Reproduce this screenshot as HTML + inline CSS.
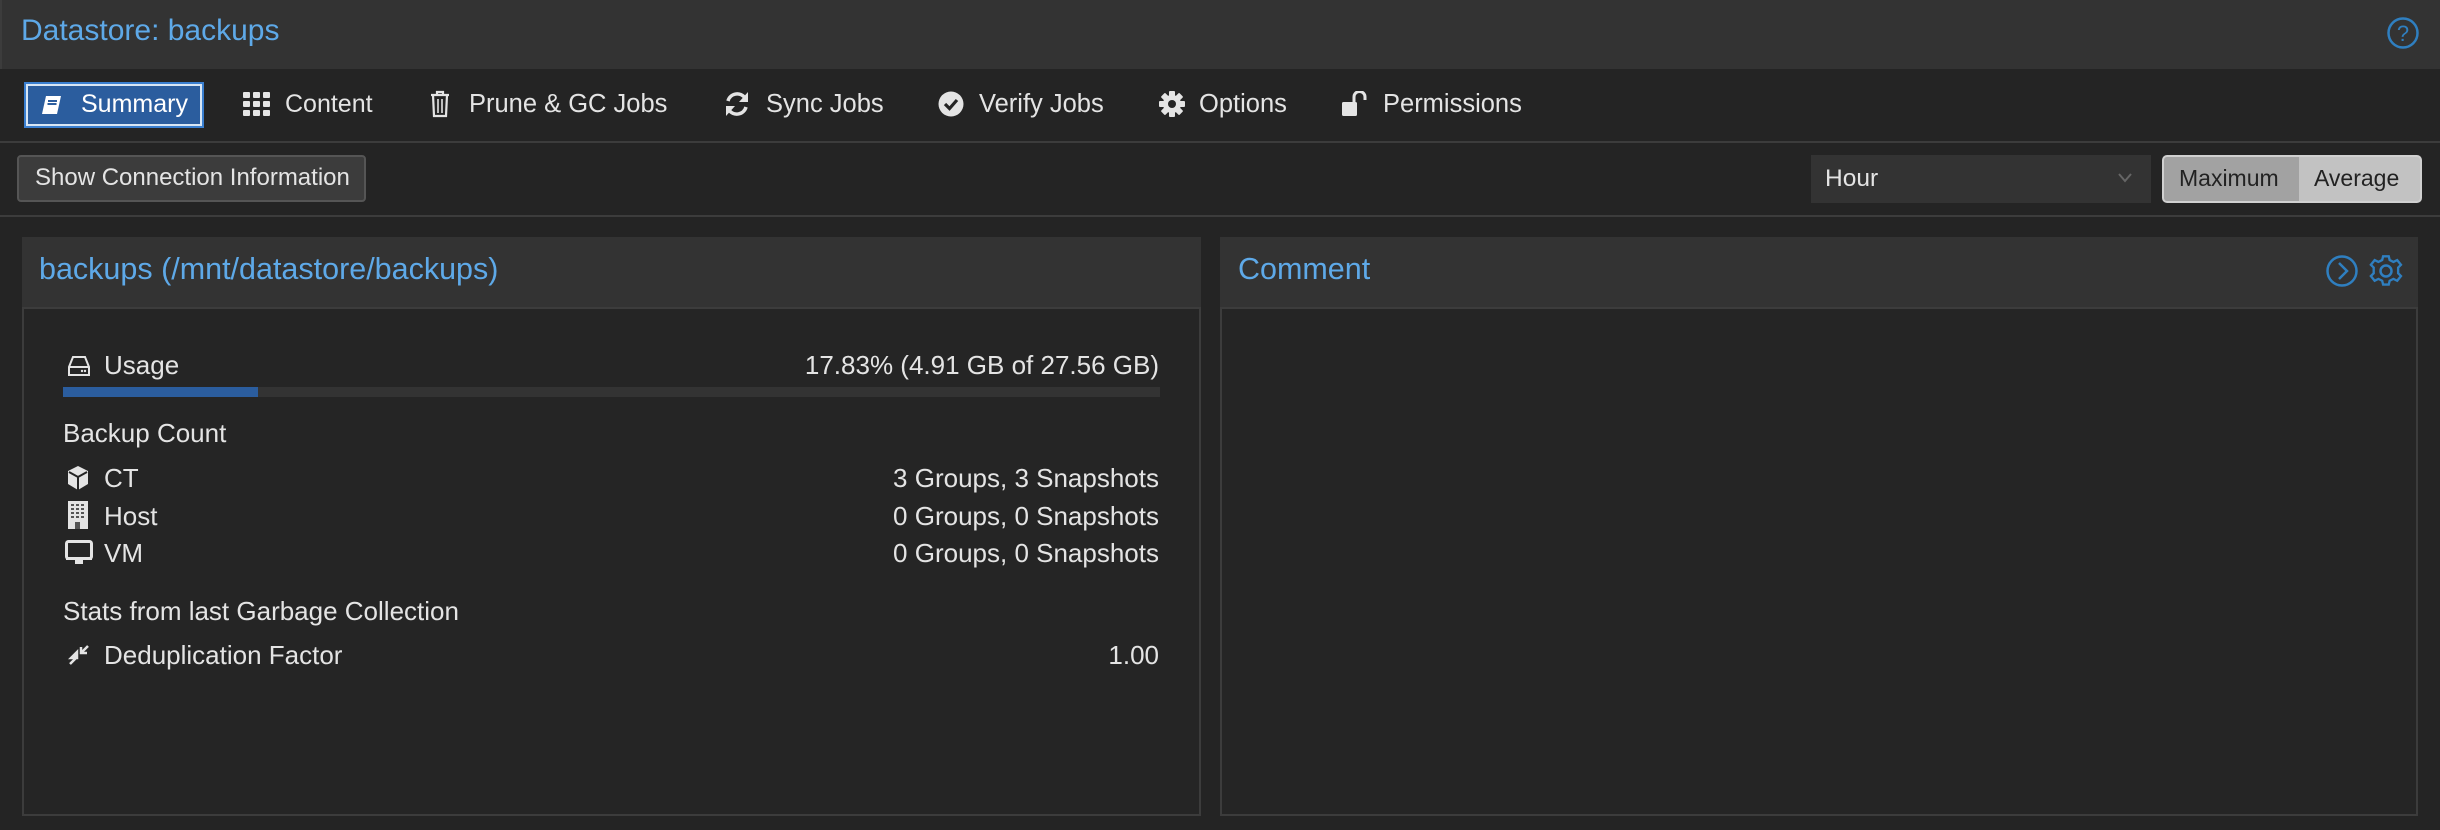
<!DOCTYPE html>
<html><head><style>
*{margin:0;padding:0;box-sizing:border-box}
body{width:2440px;height:830px;background:#242424;font-family:"Liberation Sans",Arial,sans-serif;color:#e4e4e4;position:relative;overflow:hidden}
.a{position:absolute;white-space:nowrap}
.t{font-size:26px;line-height:30px}
svg{display:block}
</style></head><body>
<div class="a" style="left:0;top:0;width:2440px;height:69px;background:#333;border-left:2px solid #3c3c3c"></div>
<div class="a" style="left:21px;top:13px;font-size:30px;line-height:36px;color:#5ea9e8">Datastore: backups</div>
<svg class="a" style="left:2386px;top:16px" width="34" height="34" viewBox="0 0 34 34"><circle cx="17" cy="17" r="14.5" fill="none" stroke="#2f7fc0" stroke-width="2.5"/><text x="17" y="25" text-anchor="middle" font-size="22" font-family="Liberation Sans" fill="#2f7fc0">?</text></svg>

<div class="a" style="left:0;top:141px;width:2440px;height:2px;background:#3c3c3c"></div>
<div class="a" style="left:24px;top:82px;width:180px;height:46px;background:#2b5d9e;border:2px solid #3a7fd0;box-shadow:inset 0 0 0 2px #d8e6f5"></div>
<svg class="a" style="left:40px;top:94px" width="24" height="24" viewBox="0 0 24 24"><path d="M6 2h15l-4 18H2z" fill="#fff"/><path d="M8 7h9M7.5 10h9" stroke="#2b5d9e" stroke-width="2"/></svg>
<div class="a t" style="left:81px;top:89px;font-size:25px;color:#fff">Summary</div>
<svg class="a" style="left:243px;top:92px" width="28" height="24" viewBox="0 0 28 24"><g fill="#e4e4e4"><rect x="0" y="0" width="7" height="6" rx="1"/><rect x="10" y="0" width="7" height="6" rx="1"/><rect x="20" y="0" width="7" height="6" rx="1"/><rect x="0" y="9" width="7" height="6" rx="1"/><rect x="10" y="9" width="7" height="6" rx="1"/><rect x="20" y="9" width="7" height="6" rx="1"/><rect x="0" y="18" width="7" height="6" rx="1"/><rect x="10" y="18" width="7" height="6" rx="1"/><rect x="20" y="18" width="7" height="6" rx="1"/></g></svg>
<div class="a t" style="left:285px;top:89px;font-size:25px">Content</div>
<svg class="a" style="left:430px;top:90px" width="20" height="28" viewBox="0 0 20 28"><path d="M1 5h18M7 5V2h6v3M3 5l1 21h12l1-21" fill="none" stroke="#e4e4e4" stroke-width="2.2"/><path d="M8 9v14M12 9v14" stroke="#e4e4e4" stroke-width="1.6"/></svg>
<div class="a t" style="left:469px;top:89px;font-size:25.5px">Prune &amp; GC Jobs</div>
<svg class="a" style="left:724px;top:90px" width="26" height="28" viewBox="0 0 26 28"><path d="M21 8A9.5 9.5 0 0 0 4 11M5 20a9.5 9.5 0 0 0 17-3" fill="none" stroke="#e4e4e4" stroke-width="3.5"/><path d="M24 2v10h-9zM2 26V16h9z" fill="#e4e4e4"/></svg>
<div class="a t" style="left:766px;top:89px;font-size:25.5px">Sync Jobs</div>
<svg class="a" style="left:938px;top:91px" width="26" height="26" viewBox="0 0 26 26"><circle cx="13" cy="13" r="12.5" fill="#e4e4e4"/><path d="M7 13l4.5 4.5L19 9" fill="none" stroke="#242424" stroke-width="3.2"/></svg>
<div class="a t" style="left:979px;top:89px;font-size:25.5px">Verify Jobs</div>
<svg class="a" style="left:1159px;top:91px" width="26" height="26" viewBox="0 0 26 26"><g fill="#e4e4e4"><circle cx="13" cy="13" r="9"/><rect x="10" y="0" width="6" height="26" rx="1"/><rect x="10" y="0" width="6" height="26" rx="1" transform="rotate(45 13 13)"/><rect x="10" y="0" width="6" height="26" rx="1" transform="rotate(90 13 13)"/><rect x="10" y="0" width="6" height="26" rx="1" transform="rotate(135 13 13)"/></g><circle cx="13" cy="13" r="4" fill="#242424"/></svg>
<div class="a t" style="left:1199px;top:89px;font-size:25.5px">Options</div>
<svg class="a" style="left:1342px;top:91px" width="28" height="26" viewBox="0 0 28 26"><rect x="0" y="11" width="15" height="14" rx="1.5" fill="#e4e4e4"/><path d="M12 11V6a5.5 5.5 0 0 1 11 0v3" fill="none" stroke="#e4e4e4" stroke-width="3"/></svg>
<div class="a t" style="left:1383px;top:89px;font-size:25.5px">Permissions</div>

<div class="a" style="left:0;top:215px;width:2440px;height:2px;background:#3c3c3c"></div>
<div class="a" style="left:17px;top:155px;width:349px;height:47px;background:#3c3c3c;border:2px solid #555;border-radius:4px"></div>
<div class="a t" style="left:35px;top:163px;font-size:24px">Show Connection Information</div>
<div class="a" style="left:1811px;top:155px;width:340px;height:48px;background:#333"></div>
<div class="a t" style="left:1825px;top:164px;font-size:24.5px">Hour</div>
<svg class="a" style="left:2117px;top:172px" width="16" height="12" viewBox="0 0 16 12"><path d="M2 2l6 7 6-7" fill="none" stroke="#666" stroke-width="2"/></svg>
<div class="a" style="left:2162px;top:155px;width:260px;height:48px;background:#c2c2c2;border-radius:5px;border:2px solid #d0d0d0"></div>
<div class="a" style="left:2164px;top:157px;width:135px;height:44px;background:#a2a2a2;border-radius:3px 0 0 3px"></div>
<div class="a t" style="left:2179px;top:163px;font-size:23px;color:#222">Maximum</div>
<div class="a t" style="left:2314px;top:163px;font-size:23px;color:#222">Average</div>

<!-- left panel -->
<div class="a" style="left:22px;top:237px;width:1179px;height:70px;background:#333"></div>
<div class="a" style="left:39px;top:251px;font-size:30.5px;line-height:36px;color:#5ea9e8">backups (/mnt/datastore/backups)</div>
<div class="a" style="left:22px;top:307px;width:1179px;height:509px;border:2px solid #3c3c3c;background:#252525"></div>
<svg class="a" style="left:67px;top:355px" width="24" height="22" viewBox="0 0 24 22"><path d="M6 2h12l4 10v8H2v-8z" fill="none" stroke="#e4e4e4" stroke-width="2"/><path d="M2 12h20" stroke="#e4e4e4" stroke-width="2"/><circle cx="15" cy="16" r="1.2" fill="#e4e4e4"/><circle cx="18" cy="16" r="1.2" fill="#e4e4e4"/></svg>
<div class="a t" style="left:104px;top:350px">Usage</div>
<div class="a t" style="right:1281px;top:350px">17.83% (4.91 GB of 27.56 GB)</div>
<div class="a" style="left:63px;top:387px;width:1097px;height:10px;background:#333"></div>
<div class="a" style="left:63px;top:387px;width:195px;height:10px;background:#2b5d9e"></div>
<div class="a t" style="left:63px;top:418px">Backup Count</div>
<svg class="a" style="left:66px;top:465px" width="24" height="26" viewBox="0 0 24 26"><path d="M12 1l10 5v13l-10 6-10-6V6z" fill="#e4e4e4"/><path d="M3 7l9 5 9-5M12 12v13" fill="none" stroke="#242424" stroke-width="2"/></svg>
<div class="a t" style="left:104px;top:463px">CT</div>
<div class="a t" style="right:1281px;top:463px">3 Groups, 3 Snapshots</div>
<svg class="a" style="left:68px;top:501px" width="20" height="28" viewBox="0 0 20 28"><rect x="0" y="0" width="20" height="28" fill="#e4e4e4"/><g fill="#555"><rect x="3" y="3" width="3" height="2"/><rect x="8" y="3" width="3" height="2"/><rect x="13" y="3" width="3" height="2"/><rect x="3" y="7" width="3" height="2"/><rect x="8" y="7" width="3" height="2"/><rect x="13" y="7" width="3" height="2"/><rect x="3" y="11" width="3" height="2"/><rect x="8" y="11" width="3" height="2"/><rect x="13" y="11" width="3" height="2"/><rect x="3" y="15" width="3" height="2"/><rect x="8" y="15" width="3" height="2"/><rect x="13" y="15" width="3" height="2"/><rect x="7" y="21" width="5" height="7"/></g></svg>
<div class="a t" style="left:104px;top:501px">Host</div>
<div class="a t" style="right:1281px;top:501px">0 Groups, 0 Snapshots</div>
<svg class="a" style="left:65px;top:540px" width="28" height="26" viewBox="0 0 28 26"><rect x="1.5" y="1.5" width="25" height="17" rx="2" fill="none" stroke="#e4e4e4" stroke-width="3"/><path d="M1 17h26v3H1zM10 20h8v4h-8z" fill="#e4e4e4"/></svg>
<div class="a t" style="left:104px;top:538px">VM</div>
<div class="a t" style="right:1281px;top:538px">0 Groups, 0 Snapshots</div>
<div class="a t" style="left:63px;top:596px">Stats from last Garbage Collection</div>
<svg class="a" style="left:68px;top:644px" width="22" height="22" viewBox="0 0 22 22"><path d="M2 20l7-7M9 8v6H3z" fill="#e4e4e4" stroke="#e4e4e4" stroke-width="2.5"/><path d="M13 9l7-7M13 3v6h6" fill="none" stroke="#e4e4e4" stroke-width="2.5"/></svg>
<div class="a t" style="left:104px;top:640px">Deduplication Factor</div>
<div class="a t" style="right:1281px;top:640px">1.00</div>

<!-- right panel -->
<div class="a" style="left:1220px;top:237px;width:1198px;height:70px;background:#333"></div>
<div class="a" style="left:1238px;top:251px;font-size:30.5px;line-height:36px;color:#5ea9e8">Comment</div>
<svg class="a" style="left:2325px;top:254px" width="34" height="34" viewBox="0 0 34 34"><circle cx="17" cy="17" r="14.5" fill="none" stroke="#2f7fc0" stroke-width="2.5"/><path d="M14 9l8 8-8 8" fill="none" stroke="#2f7fc0" stroke-width="2.5"/></svg>
<svg class="a" style="left:2369px;top:254px" width="34" height="34" viewBox="0 0 34 34"><g fill="none" stroke="#2f7fc0" stroke-width="2.5"><path d="M14 2h6l1 4 4 2 4-2 4 5-3 3v6l3 3-4 5-4-2-4 2-1 4h-6l-1-4-4-2-4 2-4-5 3-3v-6l-3-3 4-5 4 2 4-2z" transform="translate(0 -0.5) scale(0.94) translate(1 1)"/><circle cx="17" cy="17" r="5.5"/></g></svg>
<div class="a" style="left:1220px;top:307px;width:1198px;height:509px;border:2px solid #3c3c3c;background:#252525"></div>
</body></html>
